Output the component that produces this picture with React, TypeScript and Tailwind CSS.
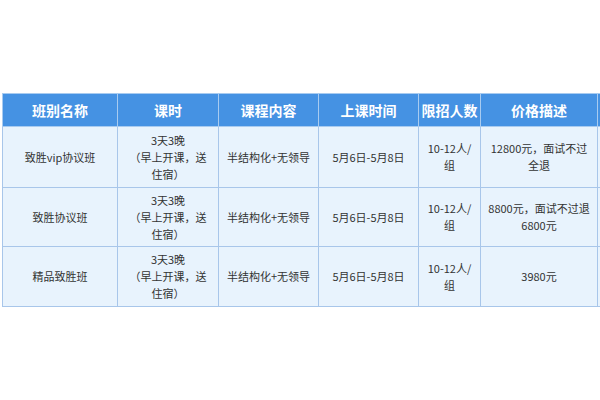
const HEADERS = ["班别名称", "课时", "课程内容", "上课时间", "限招人数", "价格描述", ""];

const ROWS = [
  { name: "致胜vip协议班", price: ["12800元，面试不过", "全退"], h: "h-[61px]" },
  { name: "致胜协议班", price: ["8800元，面试不过退", "6800元"], h: "h-[59px]" },
  { name: "精品致胜班", price: ["3980元"], h: "h-[60px]" },
];

const WIDTHS = ["w-[115px]", "w-[101px]", "w-[100px]", "w-[100px]", "w-[62px]", "w-[117px]", "w-[80px]"];

function Lines({ lines }: { lines: string[] }) {
  return (
    <>
      {lines.map((l, i) => (
        <span key={i} className="block whitespace-nowrap">
          {l}
        </span>
      ))}
    </>
  );
}

export default function App() {
  return (
    <div
      className="w-[600px] h-[400px] bg-white overflow-hidden pt-[93px] pl-[2px]"
      style={{ fontFamily: '"Noto Sans CJK SC", "Noto Sans", sans-serif' }}
    >
      <table className="table-fixed border-collapse w-[675px]">
        <colgroup>
          {WIDTHS.map((w, i) => (
            <col key={i} className={w} />
          ))}
        </colgroup>
        <thead>
          <tr className="h-[33px] bg-[#4592e3]">
            {HEADERS.map((h, i) => (
              <th
                key={i}
                className="border border-[#a8cbf0] text-white text-[14px] font-bold text-center p-0"
              >
                {h}
              </th>
            ))}
          </tr>
        </thead>
        <tbody>
          {ROWS.map((r) => (
            <tr key={r.name} className={`${r.h} bg-[#e8f3fd] text-[#333] text-[11px] leading-[17px]`}>
              <td className="border border-[#a8c6ea] text-center p-0">{r.name}</td>
              <td className="border border-[#a8c6ea] text-center p-0">
                <Lines lines={["3天3晚", "（早上开课，送", "住宿）"]} />
              </td>
              <td className="border border-[#a8c6ea] text-center p-0">半结构化+无领导</td>
              <td className="border border-[#a8c6ea] text-center p-0">5月6日-5月8日</td>
              <td className="border border-[#a8c6ea] text-center p-0">
                <Lines lines={["10-12人/", "组"]} />
              </td>
              <td className="border border-[#a8c6ea] text-center p-0">
                <Lines lines={r.price} />
              </td>
              <td className="border border-[#a8c6ea]"></td>
            </tr>
          ))}
        </tbody>
      </table>
    </div>
  );
}
